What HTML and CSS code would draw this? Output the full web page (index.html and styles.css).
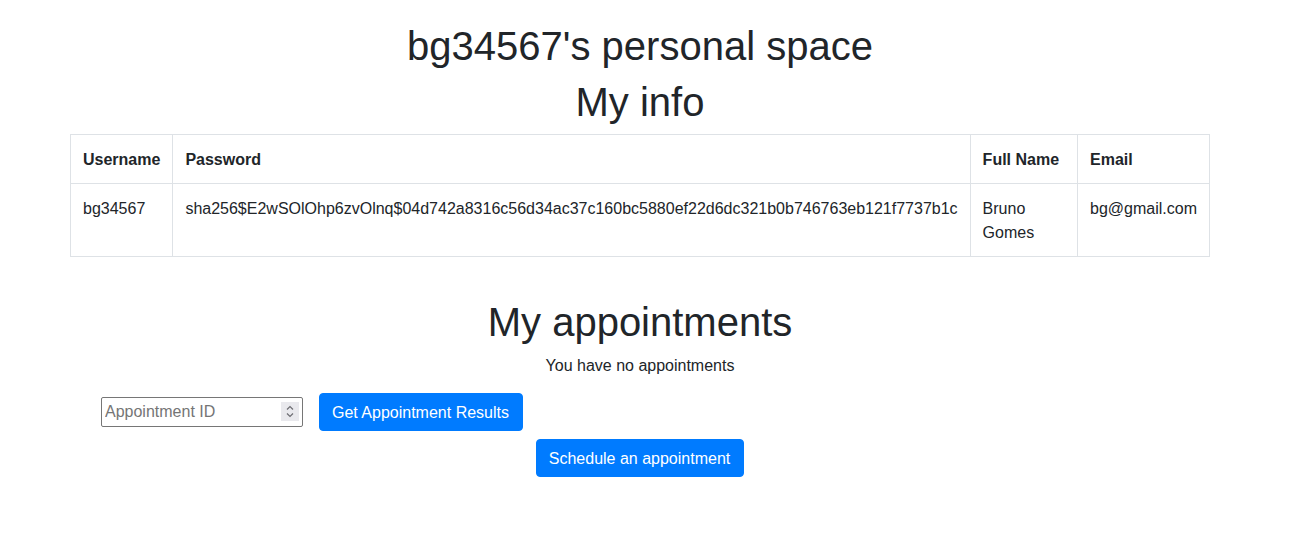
FILE: index.html
```html
<!DOCTYPE html>
<html lang="en">
<head>
<meta charset="utf-8">
<title>Personal space</title>
<link rel="stylesheet" href="styles.css">
</head>
<body>
<div class="page">
  <div class="container">
    <h1 class="title">bg34567's personal space</h1>
    <h1 class="title">My info</h1>
    <table class="info">
      <thead>
        <tr>
          <th>Username</th>
          <th>Password</th>
          <th>Full Name</th>
          <th>Email</th>
        </tr>
      </thead>
      <tbody>
        <tr>
          <td>bg34567</td>
          <td>sha256$E2wSOlOhp6zvOlnq$04d742a8316c56d34ac37c160bc5880ef22d6dc321b0b746763eb121f7737b1c</td>
          <td>Bruno Gomes</td>
          <td>bg@gmail.com</td>
        </tr>
      </tbody>
    </table>
    <h1 class="title appts">My appointments</h1>
    <p class="note">You have no appointments</p>
    <form class="results">
      <span class="field">
        <input class="appt-id" type="number" placeholder="Appointment ID">
        <span class="spin" aria-hidden="true">
          <svg width="18" height="19" viewBox="0 0 18 19">
            <path d="M6 7.5 L9 4.5 L12 7.5" fill="none" stroke="#6d6d72" stroke-width="1.2"/>
            <path d="M6 11.5 L9 14.5 L12 11.5" fill="none" stroke="#6d6d72" stroke-width="1.2"/>
          </svg>
        </span>
      </span>
      <button type="button" class="btn">Get Appointment Results</button>
    </form>
    <div class="schedule">
      <button type="button" class="btn">Schedule an appointment</button>
    </div>
  </div>
</div>
</body>
</html>
```
FILE: styles.css
```css
* { box-sizing: border-box; }
html, body {
  margin: 0;
  padding: 0;
  background: #fff;
}
body {
  font-family: "Liberation Sans", Arial, sans-serif;
  font-size: 16px;
  line-height: 1.5;
  color: #212529;
}
.page {
  width: 1280px;
  padding-top: 22px;
}
.container {
  width: 1140px;
  margin: 0 auto;
}
.title {
  margin: 0 0 8px;
  font-size: 40px;
  font-weight: 500;
  line-height: 1.2;
  text-align: center;
}
.info {
  width: 100%;
  border-collapse: collapse;
  margin-bottom: 41px;
}
.info th, .info td {
  border: 1px solid #dee2e6;
  padding: 13px 12px 11px;
  text-align: left;
  vertical-align: top;
}
.info th {
  font-weight: 700;
}
.note {
  margin: 0 0 15px;
  text-align: center;
}
.results {
  display: flex;
  align-items: center;
  gap: 16px;
  padding-left: 31px;
}
.field {
  position: relative;
  display: block;
  height: 30px;
}
.appt-id {
  display: block;
  width: 202px;
  height: 30px;
  padding: 1px 3px;
  border: 1px solid #767676;
  border-radius: 2px;
  font-family: "Liberation Sans", Arial, sans-serif;
  font-size: 16px;
  color: #212529;
}
.appt-id::-webkit-inner-spin-button,
.appt-id::-webkit-outer-spin-button {
  -webkit-appearance: none;
  margin: 0;
}
.appt-id::placeholder {
  color: #757575;
}
.spin {
  position: absolute;
  left: 180px;
  top: 5px;
  width: 18px;
  height: 19px;
  background: #e9e9ed;
  pointer-events: none;
}
.spin svg {
  display: block;
}
.btn {
  display: inline-block;
  height: 38px;
  padding: 7px 13px 5px 12px;
  border: 1px solid #007bff;
  border-radius: 4px;
  background: #007bff;
  color: #fff;
  font-family: "Liberation Sans", Arial, sans-serif;
  font-size: 16px;
  line-height: 1.5;
  cursor: pointer;
}
.schedule {
  display: flex;
  justify-content: center;
  margin-top: 8px;
}
```
